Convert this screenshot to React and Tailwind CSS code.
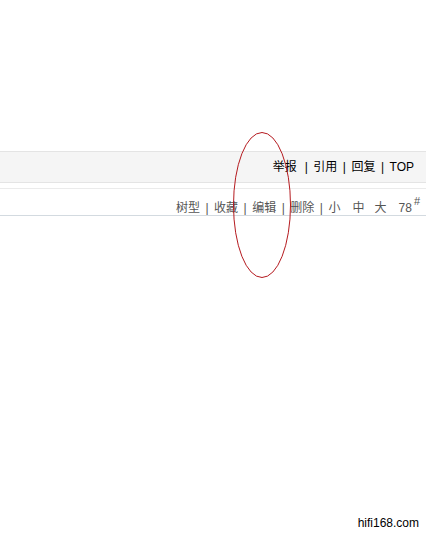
const Sep = ({ className = "" }) => <span className={`px-[5.5px] ${className}`}>|</span>;

export default function App() {
  return (
    <div
      className="relative h-[537px] w-[426px] overflow-hidden bg-white text-[12px]"
      style={{ fontFamily: '"Liberation Sans", "Noto Sans CJK SC", sans-serif' }}
    >
      <div className="h-[151px]" />

      {/* post action bar */}
      <div className="h-[32px] border-y border-[#e4e4e4] bg-[#f5f5f5]">
        <div className="flex h-[30px] items-center justify-end pr-[12px] leading-[12px] text-black">
          <span>举报</span>
          <Sep className="pl-[8px]" />
          <span>引用</span>
          <Sep />
          <span>回复</span>
          <Sep />
          <span>TOP</span>
        </div>
      </div>

      <div className="mt-[5px] border-t border-[#ebebeb]">
        <div className="flex justify-end border-b border-[#d3dae0] pt-[13px] pb-[1px] pr-[6px] leading-[12px] text-[#555]">
          <span>树型</span>
          <Sep />
          <span>收藏</span>
          <Sep />
          <span>编辑</span>
          <Sep />
          <span>删除</span>
          <Sep />
          <span>小</span>
          <span className="ml-[12px]">中</span>
          <span className="ml-[10px]">大</span>
          <span className="ml-[12px]">78</span>
          <span className="relative -top-[7px] ml-[2px] text-[11px]">#</span>
        </div>
      </div>

      {/* red marker circle */}
      <svg className="absolute left-[232px] top-[131px]" width="60" height="148" viewBox="0 0 60 148">
        <ellipse cx="30" cy="74" rx="28.5" ry="72.5" fill="none" stroke="#b51a1f" strokeWidth="1" />
      </svg>

      <div className="absolute bottom-[8px] right-[7px] leading-[12px] text-black">hifi168.com</div>
    </div>
  );
}
